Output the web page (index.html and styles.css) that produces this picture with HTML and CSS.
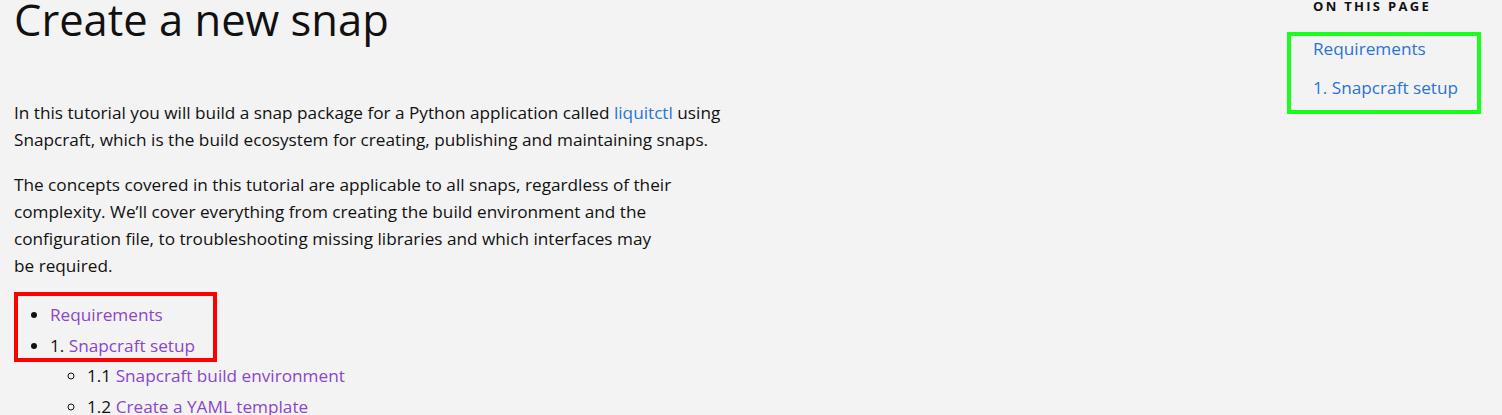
FILE: index.html
```html
<!DOCTYPE html>
<html lang="en">
<head>
<meta charset="utf-8">
<title>Create a new snap</title>
<link rel="stylesheet" href="styles.css">
</head>
<body>
<div class="page">
  <main class="content">
    <h1 class="title">Create a new snap</h1>
    <p class="para">In this tutorial you will build a snap package for a Python application called <a class="link" href="#">liquitctl</a> using<br>Snapcraft, which is the build ecosystem for creating, publishing and maintaining snaps.</p>
    <p class="para">The concepts covered in this tutorial are applicable to all snaps, regardless of their<br>complexity. We’ll cover everything from creating the build environment and the<br>configuration file, to troubleshooting missing libraries and which interfaces may<br>be required.</p>
    <div class="toc-wrap">
      <ul class="toc">
        <li><a class="visited" href="#">Requirements</a></li>
        <li>1. <a class="visited" href="#">Snapcraft setup</a>
          <ul class="toc-sub">
            <li>1.1 <a class="visited" href="#">Snapcraft build environment</a></li>
            <li>1.2 <a class="visited" href="#">Create a YAML template</a></li>
          </ul>
        </li>
      </ul>
      <div class="mark-red"></div>
    </div>
  </main>
  <aside class="side">
    <div class="side-title">ON THIS PAGE</div>
    <div class="side-box">
      <a class="side-link" href="#">Requirements</a>
      <a class="side-link" href="#">1. Snapcraft setup</a>
    </div>
  </aside>
</div>
</body>
</html>
```
FILE: styles.css
```css
html, body {
  margin: 0;
  padding: 0;
  background: #f3f3f3;
}
body {
  font-family: "Open Sans", "Noto Sans", sans-serif;
  color: #111;
  font-size: 17.2px;
  overflow: hidden;
}
.page {
  display: flex;
  justify-content: space-between;
  padding-left: 14px;
}
.content {
  width: 780px;
}
.title {
  font-size: 43.5px;
  font-weight: 400;
  margin: 0;
  line-height: 40px;
  color: #111;
}
.para {
  line-height: 27px;
  margin: 59px 0 0 0;
}
.para + .para {
  margin-top: 18px;
}
.link {
  color: #2b74d2;
  text-decoration: none;
}
.visited {
  color: #8b46c9;
  text-decoration: none;
}
.toc-wrap {
  position: relative;
  margin-top: 22px;
}
.toc {
  margin: 0;
  padding-left: 36px;
  list-style: disc;
}
.toc li {
  line-height: 27px;
  margin-bottom: 4px;
}
.toc-sub {
  margin: 3px 0 0 0;
  padding-left: 37px;
  list-style: circle;
}
.mark-red {
  position: absolute;
  left: 0;
  top: -9px;
  width: 195px;
  height: 62px;
  border: 4px solid #ff0000;
}
.side {
  width: 189px;
  position: relative;
}
.side-title {
  font-size: 13px;
  font-weight: 700;
  letter-spacing: 2.3px;
  line-height: 13px;
  margin-top: 0;
  color: #111;
}
.side-box {
  margin: 19px 0 0 -26px;
  border: 4px solid #17ff1a;
  display: flex;
  flex-direction: column;
  padding: 3px 0 0 22px;
  box-sizing: border-box;
  height: 82px;
  width: 194px;
}
.side-link {
  color: #2b74d2;
  text-decoration: none;
  line-height: 20px;
  margin-bottom: 19px;
}
```
